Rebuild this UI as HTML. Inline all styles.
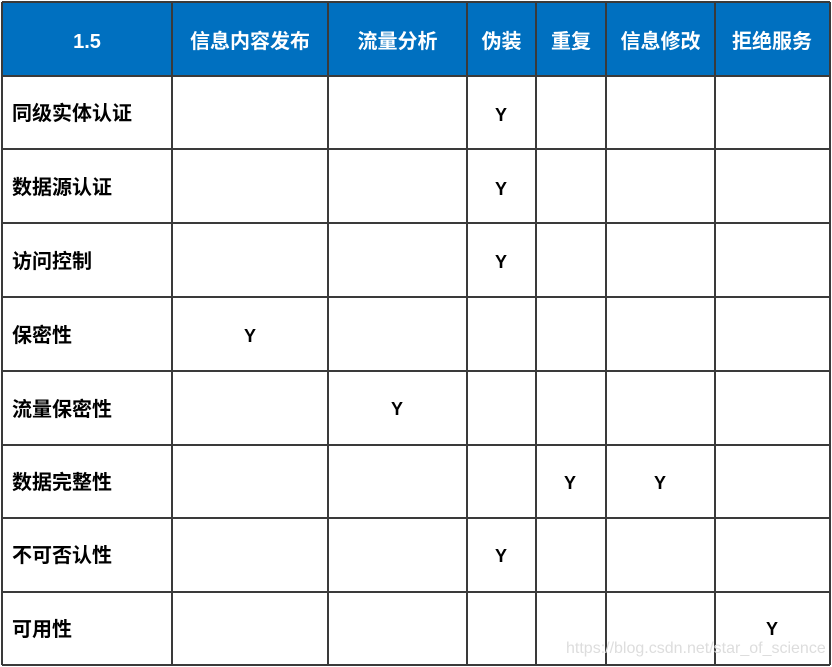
<!DOCTYPE html><html><head><meta charset="utf-8"><style>
body{margin:0;width:832px;height:667px;background:#fff;position:relative;overflow:hidden;font-family:"Liberation Sans","Noto Sans CJK SC",sans-serif;font-weight:bold}
.h{position:absolute;left:2px;top:2px;width:828px;height:73px;background:#0070c0}
.v,.r{position:absolute;background:#3a3a3a}
.v{width:2px;top:2px;height:663px}
.r{height:2px;left:2px;width:828px}
.t{position:absolute;font-size:20px;line-height:22px}
.w{color:#fff;text-align:center}
.y{font-size:18px}
.wm{position:absolute;left:566px;top:640px;color:#ddd;font-weight:normal;font-size:16px}
</style></head><body>
<div class="h"></div>
<div class="r" style="top:1px"></div><div class="r" style="top:75px"></div><div class="r" style="top:148px"></div><div class="r" style="top:222px"></div><div class="r" style="top:296px"></div><div class="r" style="top:370px"></div><div class="r" style="top:444px"></div><div class="r" style="top:517px"></div><div class="r" style="top:591px"></div><div class="r" style="top:664px"></div>
<div class="v" style="left:1px"></div><div class="v" style="left:171px"></div><div class="v" style="left:327px"></div><div class="v" style="left:466px"></div><div class="v" style="left:535px"></div><div class="v" style="left:605px"></div><div class="v" style="left:714px"></div><div class="v" style="left:829px"></div>
<div class="t w" style="left:2px;width:170px;top:31px">1.5</div>
<div class="t w" style="left:172px;width:156px;top:31px">信息内容发布</div>
<div class="t w" style="left:328px;width:139px;top:31px">流量分析</div>
<div class="t w" style="left:467px;width:69px;top:31px">伪装</div>
<div class="t w" style="left:536px;width:70px;top:31px">重复</div>
<div class="t w" style="left:606px;width:109px;top:31px">信息修改</div>
<div class="t w" style="left:715px;width:114px;top:31px">拒绝服务</div>
<div class="t" style="left:12px;top:103px">同级实体认证</div>
<div class="t" style="left:12px;top:177px">数据源认证</div>
<div class="t" style="left:12px;top:251px">访问控制</div>
<div class="t" style="left:12px;top:325px">保密性</div>
<div class="t" style="left:12px;top:399px">流量保密性</div>
<div class="t" style="left:12px;top:472px">数据完整性</div>
<div class="t" style="left:12px;top:545px">不可否认性</div>
<div class="t" style="left:12px;top:619px">可用性</div>
<div class="t y" style="left:495px;top:104px">Y</div>
<div class="t y" style="left:495px;top:178px">Y</div>
<div class="t y" style="left:495px;top:251px">Y</div>
<div class="t y" style="left:244px;top:325px">Y</div>
<div class="t y" style="left:391px;top:398px">Y</div>
<div class="t y" style="left:564px;top:472px">Y</div>
<div class="t y" style="left:654px;top:472px">Y</div>
<div class="t y" style="left:495px;top:545px">Y</div>
<div class="t y" style="left:766px;top:618px">Y</div>
<div class="wm">https://blog.csdn.net/star_of_science</div>
</body></html>
